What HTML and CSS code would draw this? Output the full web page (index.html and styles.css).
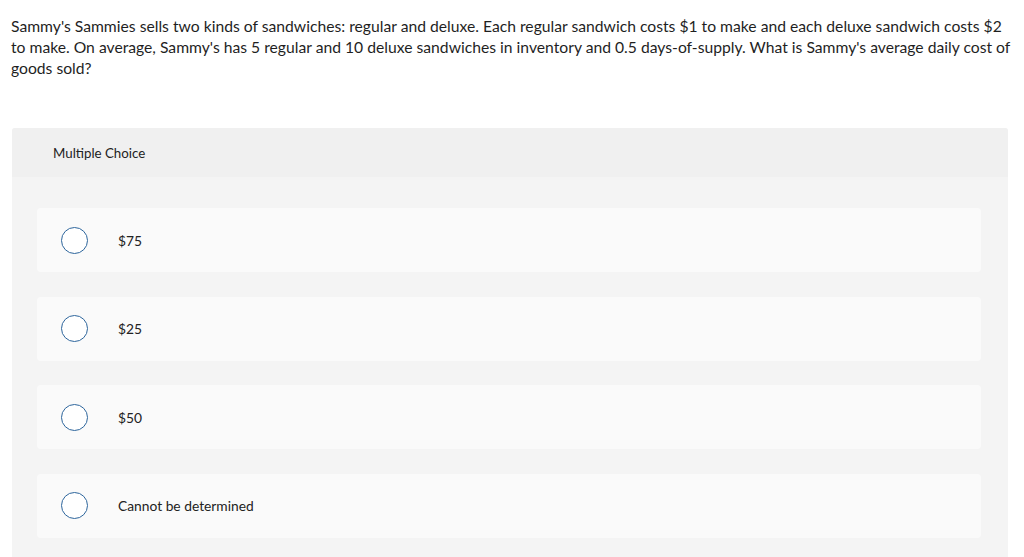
FILE: index.html
```html
<!DOCTYPE html>
<html>
<head>
<meta charset="utf-8">
<link rel="stylesheet" href="styles.css">
</head>
<body>
<div class="page">
  <p class="question">Sammy's Sammies sells two kinds of sandwiches: regular and deluxe. Each regular sandwich costs $1 to make and each deluxe sandwich costs $2 to make. On average, Sammy's has 5 regular and 10 deluxe sandwiches in inventory and 0.5 days-of-supply. What is Sammy's average daily cost of goods sold?</p>
  <div class="panel">
    <div class="panel-head">Multiple Choice</div>
    <div class="choices">
      <div class="choice"><span class="radio"></span><span class="label">$75</span></div>
      <div class="choice"><span class="radio"></span><span class="label">$25</span></div>
      <div class="choice"><span class="radio"></span><span class="label">$50</span></div>
      <div class="choice"><span class="radio"></span><span class="label">Cannot be determined</span></div>
    </div>
  </div>
</div>
</body>
</html>
```
FILE: styles.css
```css
html, body { margin: 0; padding: 0; background: #fff; }
body { font-family: "Lato", "Open Sans", sans-serif; color: #1f1f1f; }
.page { padding: 16px 12px 0 11px; }
.question { margin: 0; font-size: 15.7px; line-height: 21px; width: 1004px; }
.panel { margin-top: 49px; width: 996px; background: #f4f4f4; border-radius: 3px 3px 0 0; overflow: hidden; margin-left: 1px; }
.panel-head { background: #f0f0f0; height: 49px; display: flex; align-items: center; padding-left: 41px; font-size: 13.3px; color: #222; }
.choices { padding: 31px 27px 30px 25px; display: flex; flex-direction: column; gap: 24.6px; }
.choice { background: #fafafa; border-radius: 4px; height: 64px; display: flex; align-items: center; font-size: 13.8px; color: #222; }
.radio { width: 25px; height: 25px; border: 1px solid #2d659c; border-radius: 50%; background: #fff; margin-left: 24px; flex: none; }
.label { margin-left: 30px; }
```
